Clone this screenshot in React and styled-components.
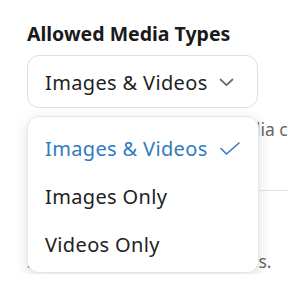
import React from 'react'
import styled, { createGlobalStyle } from 'styled-components'

const GlobalStyle = createGlobalStyle`
  body {
    margin: 0;
    background: #ffffff;
    font-family: "Noto Sans", "Open Sans", sans-serif;
    overflow: hidden;
  }
`

const Page = styled.div`
  width: 340px;
  padding: 22px 27px 0;
  box-sizing: border-box;
`

const Label = styled.div`
  font-size: 19.5px;
  font-weight: 700;
  line-height: 24px;
  color: #1a1a1a;
  margin-bottom: 9px;
`

const SelectWrap = styled.div`
  position: relative;
  width: 231px;
`

const SelectBox = styled.div`
  height: 53px;
  box-sizing: border-box;
  border: 1px solid #dedede;
  border-radius: 12px;
  background: #fff;
  display: flex;
  align-items: center;
  justify-content: space-between;
  padding: 2px 23px 0 17px;
  font-size: 20px;
  letter-spacing: 0.35px;
  color: #1f1f1f;
`

const Menu = styled.ul`
  position: absolute;
  top: calc(100% + 8px);
  left: 0;
  width: 232px;
  box-sizing: border-box;
  margin: 0;
  padding: 6px 0 5px;
  list-style: none;
  background: #fff;
  border: 1px solid #e6e6e6;
  border-radius: 12px;
  box-shadow: 0 4px 14px rgba(0, 0, 0, 0.13);
  z-index: 2;
`

const Item = styled.li`
  height: 48px;
  box-sizing: border-box;
  display: flex;
  align-items: center;
  justify-content: space-between;
  padding: 2px 18px 0 17px;
  font-size: 20px;
  letter-spacing: 0.35px;
  color: ${p => (p.active ? '#2f7bc2' : '#222')};
`

const Helper = styled.p`
  margin: 8px 0 0;
  font-size: 17.5px;
  line-height: 26px;
  color: #666;
  white-space: nowrap;
`

const Section = styled.div`
  margin-top: 48px;
  border-top: 1px solid #e4e4e4;
  margin-right: -27px;
  padding-top: 18px;
`

const SectionTitle = styled.div`
  font-size: 19px;
  font-weight: 700;
  line-height: 26px;
  color: #1a1a1a;
`

const SectionText = styled.p`
  margin: 13px 0 0;
  font-size: 17.5px;
  line-height: 26px;
  color: #666;
  white-space: nowrap;
`

const Chevron = () => (
  <svg width="15" height="9" viewBox="0 0 15 9" fill="none">
    <path d="M1.5 1.5 L7.5 7.2 L13.5 1.5" stroke="#6b6b6b" strokeWidth="1.8" strokeLinecap="round" strokeLinejoin="round" />
  </svg>
)

const Check = () => (
  <svg width="20" height="13" viewBox="0 0 20 13" fill="none">
    <path d="M1 6.5 L6.5 12 L19 1" stroke="#2f7bc2" strokeWidth="1.6" strokeLinecap="round" strokeLinejoin="round" />
  </svg>
)

const options = ['Images & Videos', 'Images Only', 'Videos Only']

export default function App() {
  const selected = options[0]
  return (
    <Page>
      <GlobalStyle />
      <Label>Allowed Media Types</Label>
      <SelectWrap>
        <SelectBox>
          <span>{selected}</span>
          <Chevron />
        </SelectBox>
        <Menu>
          {options.map(o => (
            <Item key={o} active={o === selected}>
              <span>{o}</span>
              {o === selected && <Check />}
            </Item>
          ))}
        </Menu>
      </SelectWrap>
      <Helper>Users can upload these media content types.</Helper>
      <Section>
        <SectionTitle>Visibility</SectionTitle>
        <SectionText>Shown to members in stories.</SectionText>
      </Section>
    </Page>
  )
}
